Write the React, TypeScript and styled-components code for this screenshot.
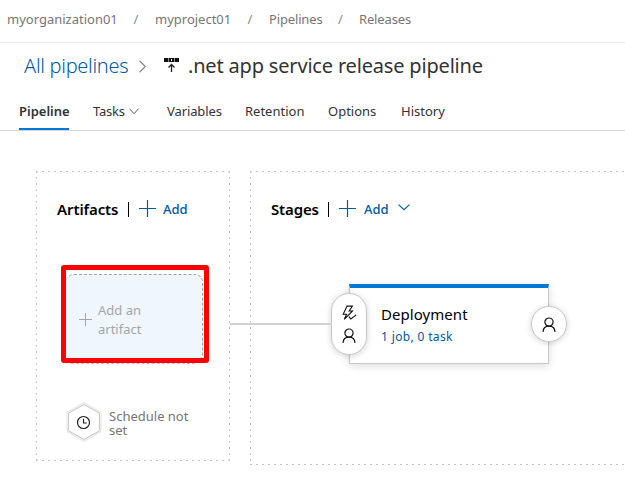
import React from "react";
import styled, { createGlobalStyle } from "styled-components";

const Global = createGlobalStyle`
  * { box-sizing: border-box; }
  body {
    margin: 0;
    background: #fff;
    color: #333;
    font-family: "Noto Sans", "Open Sans", sans-serif;
    font-size: 13px;
    overflow: hidden;
  }
`;

const Page = styled.div`
  width: 625px;
  height: 484px;
  overflow: hidden;
  background: #fff;
`;

const Breadcrumbs = styled.nav`
  display: flex;
  height: 43px;
  padding: 9px 0 0 7px;
  border-bottom: 1px solid #eaeaea;
  color: #767676;
  line-height: 20px;
`;

const Crumb = styled.span<{ $w: number; $ls?: number }>`
  width: ${(p) => p.$w}px;
  letter-spacing: ${(p) => p.$ls ?? 0}px;
  white-space: nowrap;
`;

const Slash = styled.span<{ $w?: number }>`
  width: ${(p) => p.$w ?? 38}px;
  text-align: center;
  color: #8a8a8a;
`;

const TitleBar = styled.header`
  display: flex;
  align-items: center;
  height: 46px;
  padding-left: 24px;
  font-size: 20px;
  line-height: 28px;
  white-space: nowrap;
`;

const TitleLink = styled.a<{ $ls: number }>`
  width: 104px;
  color: #005a9e;
  font-weight: 300;
  letter-spacing: ${(p) => p.$ls}px;
`;

const TitleText = styled.h1<{ $ls: number }>`
  margin: 0;
  font-size: 20px;
  font-weight: 400;
  color: #333;
  letter-spacing: ${(p) => p.$ls}px;
`;

const Chevron = styled.svg`
  flex: none;
  margin-left: 10px;
`;

const ReleaseIcon = styled.svg`
  flex: none;
  margin: 0 9px 2px 17px;
`;

const Tabs = styled.div`
  display: flex;
  gap: 24px;
  height: 42px;
  padding-left: 19px;
  border-bottom: 1px solid #d6d6d6;
`;

const Tab = styled.div<{ $w: number; $ls?: number; $active?: boolean }>`
  display: flex;
  align-items: center;
  width: ${(p) => p.$w}px;
  height: 41px;
  padding-top: 5px;
  white-space: nowrap;
  letter-spacing: ${(p) => p.$ls ?? 0}px;
  font-weight: ${(p) => (p.$active ? 600 : 400)};
  border-bottom: 2px solid ${(p) => (p.$active ? "#0078d7" : "transparent")};
  svg { margin: 0 4px 0 auto; }
`;

const Canvas = styled.main`
  position: relative;
  display: flex;
  align-items: flex-start;
  gap: 20px;
  height: 353px;
  padding: 40px 0 0 36px;
`;

const dashes = (dir: string) =>
  `repeating-linear-gradient(${dir}, #c6c6c6 0 2px, transparent 2px 6px)`;

const Panel = styled.section<{ $w: number; $h: number }>`
  flex: none;
  width: ${(p) => p.$w}px;
  height: ${(p) => p.$h}px;
  padding: 26px 0 0 21px;
  background:
    ${dashes("to right")} 0 0 / 100% 1px no-repeat,
    ${dashes("to right")} 0 100% / 100% 1px no-repeat,
    ${dashes("to bottom")} 0 0 / 1px 100% no-repeat,
    ${dashes("to bottom")} 100% 0 / 1px 100% no-repeat;
`;

const PanelHeader = styled.div`
  display: flex;
  align-items: center;
  height: 24px;
`;

const PanelTitle = styled.h2<{ $w: number; $ls: number }>`
  width: ${(p) => p.$w}px;
  margin: 0;
  font-size: 15px;
  font-weight: 600;
  color: #000;
  letter-spacing: ${(p) => p.$ls}px;
  white-space: nowrap;
`;

const Divider = styled.span`
  width: 1px;
  height: 15px;
  margin: 0 10px 0 9px;
  background: #000;
`;

const AddButton = styled.button<{ $gap?: number }>`
  display: flex;
  align-items: center;
  gap: ${(p) => p.$gap ?? 7}px;
  padding: 0;
  border: 0;
  background: none;
  color: #005a9e;
  font: 500 13px "Noto Sans", "Open Sans", sans-serif;
  svg { margin-bottom: 1px; }
  svg + span + svg { margin: 0 0 3px 1px; }
`;

const Highlight = styled.div`
  width: 148px;
  height: 98px;
  margin: 44px 0 0 4px;
  padding: 4px 0 0;
  border: 5px solid #fe0000;
  border-radius: 3px;
`;

const ArtifactCard = styled.div`
  display: flex;
  align-items: center;
  gap: 6px;
  width: 137px;
  height: 84px;
  padding: 6px 0 0 13px;
  border: 1px dashed #a6a6a6;
  border-bottom: 0;
  border-left: 0;
  border-radius: 8px 8px 3px 0;
  background: #eff6fc;
  color: #a6a6a6;
  line-height: 19px;
`;

const CardTail = styled.div`
  width: 124px;
  margin: 5px 0 0 5px;
  border-top: 1px dashed #bdbdbd;
`;

const Schedule = styled.div`
  display: flex;
  align-items: center;
  gap: 7px;
  margin: 39px 0 0 9px;
  color: #767676;
  line-height: 14px;
`;

const ScheduleText = styled.span`
  width: 90px;
  padding-top: 2px;
`;

const Connector = styled.div`
  position: absolute;
  left: 230px;
  top: 192px;
  width: 102px;
  height: 2px;
  background: #d2d2d2;
`;

const StageCard = styled.article`
  position: relative;
  width: 200px;
  height: 80px;
  margin: 63px 0 0 78px;
  padding: 16px 0 0 31px;
  border: 1px solid #c8c8c8;
  border-top: 4px solid #0078d7;
  background: #fff;
  box-shadow: 0 2px 8px rgba(0, 0, 0, 0.14);
`;

const StageName = styled.div`
  font-size: 15px;
  line-height: 20px;
  letter-spacing: 0.05px;
  color: #000;
`;

const StageJobs = styled.a`
  display: block;
  margin-top: 4px;
  font-size: 12px;
  line-height: 18px;
  letter-spacing: 0.35px;
  color: #005a9e;
`;

const Badge = styled.div<{ $x: number; $y: number; $h: number }>`
  position: absolute;
  left: ${(p) => p.$x}px;
  top: ${(p) => p.$y}px;
  display: flex;
  flex-direction: column;
  align-items: center;
  justify-content: center;
  gap: 8px;
  width: 36px;
  height: ${(p) => p.$h}px;
  border: 1px solid #c8c8c8;
  border-radius: 18px;
  background: #fff;
  box-shadow: 0 1px 6px rgba(0, 0, 0, 0.18);
`;

const Plus = ({ size, color, weight = 1.2 }: { size: number; color: string; weight?: number }) => (
  <svg width={size} height={size} viewBox={`0 0 ${size} ${size}`} fill="none" stroke={color}>
    <path d={`M0 ${size / 2}H${size}M${size / 2} 0V${size}`} strokeWidth={weight} />
  </svg>
);

const ChevronDown = ({ color, w = 11 }: { color: string; w?: number }) => (
  <svg width={w} height="7" viewBox="0 0 11 7" fill="none" stroke={color} preserveAspectRatio="none">
    <path d="M.5 .7 5.5 5.7 10.5 .7" />
  </svg>
);

const Person = () => (
  <svg width="14" height="15" viewBox="0 0 14 15" fill="none" stroke="#111" strokeWidth="1.2">
    <circle cx="7" cy="5.1" r="4.1" />
    <path d="M1 14.9C1.2 11.5 3.5 9.2 7 9.2s5.8 2.3 6 5.7" />
  </svg>
);

const Bolt = () => (
  <svg width="15" height="15" viewBox="0 0 15 15" fill="none" stroke="#111" strokeWidth="1.1">
    <path d="M5 1.1h5.4L7.2 6h3.3L2.3 14.3 4.6 9.3H1.2Z" />
    <path d="m6.8 11.7 2 2.2L14.2 9.9" />
  </svg>
);

const ClockHex = () => (
  <svg width="36" height="40" viewBox="0 0 36 40" fill="none">
    <path d="M18 1.7 34 10.8v18.4L18 38.3 2 29.2V10.8Z" stroke="#ededed" strokeWidth="3.4" />
    <path d="M18 2.5 33.4 11.2v17.6L18 37.5 2.6 28.8V11.2Z" fill="#fff" stroke="#c8c8c8" />
    <circle cx="17.5" cy="20.5" r="6" stroke="#222" strokeWidth="1.2" />
    <path d="M17.5 16.8v4.2h3.2" stroke="#222" strokeWidth="1.2" />
  </svg>
);

export default function App() {
  return (
    <>
      <Global />
      <Page>
        <Breadcrumbs>
          <Crumb $w={110}>myorganization01</Crumb>
          <Slash>/</Slash>
          <Crumb $w={76}>myproject01</Crumb>
          <Slash>/</Slash>
          <Crumb $w={53} $ls={-0.15}>Pipelines</Crumb>
          <Slash $w={37}>/</Slash>
          <Crumb $w={52} $ls={-0.15}>Releases</Crumb>
        </Breadcrumbs>
        <TitleBar>
          <TitleLink $ls={-0.28}>All pipelines</TitleLink>
          <Chevron width="9" height="13" viewBox="0 0 9 13" fill="none" stroke="#8a8a8a" strokeWidth="1.2">
            <path d="M1.5 .8 7.3 6.5 1.5 12.2" />
          </Chevron>
          <ReleaseIcon width="15" height="15" viewBox="0 0 15 15">
            <path d="M0 0h4v4H0ZM5 0h5v4H5ZM11 0h4v4H11Z" fill="#111" />
            <path d="M4 0h1v4H4ZM10 0h1v4H10Z" fill="#888" />
            <path d="M7 1h1v2H7Z" fill="#fff" />
            <path d="M7.5 14V6.5M4.5 9.5l3-3 3 3" fill="none" stroke="#222" strokeWidth="1.3" />
          </ReleaseIcon>
          <TitleText $ls={-0.18}>.net app service release pipeline</TitleText>
        </TitleBar>
        <Tabs>
          <Tab $w={50} $active>Pipeline</Tab>
          <Tab $w={50} $ls={-0.2}>Tasks<ChevronDown color="#555" w={10} /></Tab>
          <Tab $w={54} $ls={-0.1}>Variables</Tab>
          <Tab $w={59}>Retention</Tab>
          <Tab $w={49}>Options</Tab>
          <Tab $w={45}>History</Tab>
        </Tabs>
        <Canvas>
          <Panel $w={194} $h={290}>
            <PanelHeader>
              <PanelTitle $w={62} $ls={-0.1}>Artifacts</PanelTitle>
              <Divider />
              <AddButton><Plus size={17} color="#005a9e" /><span>Add</span></AddButton>
            </PanelHeader>
            <Highlight>
              <ArtifactCard>
                <Plus size={13} color="#a6a6a6" weight={1} />
                <span>Add an<br />artifact</span>
              </ArtifactCard>
              <CardTail />
            </Highlight>
            <Schedule>
              <ClockHex />
              <ScheduleText>Schedule not set</ScheduleText>
            </Schedule>
          </Panel>
          <Panel $w={420} $h={294}>
            <PanelHeader>
              <PanelTitle $w={48} $ls={-0.15}>Stages</PanelTitle>
              <Divider />
              <AddButton $gap={8}>
                <Plus size={17} color="#005a9e" /><span>Add</span><ChevronDown color="#005a9e" w={12} />
              </AddButton>
            </PanelHeader>
            <StageCard>
              <StageName>Deployment</StageName>
              <StageJobs>1 job, 0 task</StageJobs>
              <Badge $x={-19} $y={5} $h={62}><Bolt /><Person /></Badge>
              <Badge $x={181} $y={18} $h={36}><Person /></Badge>
            </StageCard>
          </Panel>
          <Connector />
        </Canvas>
      </Page>
    </>
  );
}
